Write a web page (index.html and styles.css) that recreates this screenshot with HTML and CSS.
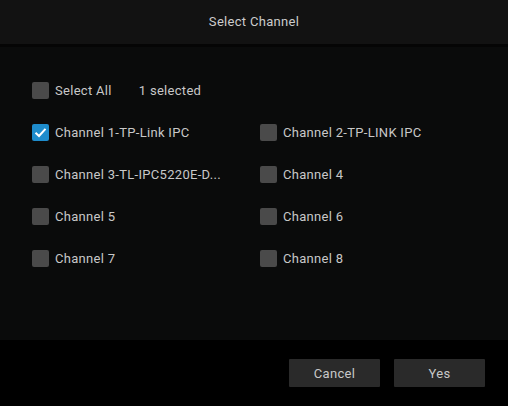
FILE: index.html
```html
<!DOCTYPE html>
<html lang="en">
<head>
    <meta charset="UTF-8">
    <title>Select Channel</title>
    <link rel="stylesheet" href="styles.css">
</head>
<body>
    <div class="dialog">
        <div class="dialogHeader">Select Channel</div>
        <div class="dialogBody">
            <div class="row">
                <label class="check"><span class="box"></span>Select All</label>
                <span class="count">1 selected</span>
            </div>
            <div class="channelGrid">
                <label class="check"><span class="box checked"><svg width="17" height="17" viewBox="0 0 17 17"><path d="M3.5 8.8 L7 12 L13.5 4.8" fill="none" stroke="#fff" stroke-width="2"/></svg></span>Channel 1-TP-Link IPC</label>
                <label class="check"><span class="box"></span>Channel 2-TP-LINK IPC</label>
                <label class="check"><span class="box"></span>Channel 3-TL-IPC5220E-D...</label>
                <label class="check"><span class="box"></span>Channel 4</label>
                <label class="check"><span class="box"></span>Channel 5</label>
                <label class="check"><span class="box"></span>Channel 6</label>
                <label class="check"><span class="box"></span>Channel 7</label>
                <label class="check"><span class="box"></span>Channel 8</label>
            </div>
        </div>
        <div class="dialogFooter">
            <button class="btn">Cancel</button>
            <button class="btn">Yes</button>
        </div>
    </div>
</body>
</html>
```

FILE: styles.css
```css
body {
    margin: 0;
    background-color: #000;
    font-family: Roboto, "Liberation Sans", sans-serif;
    font-size: 13px;
    letter-spacing: 0.3px;
    color: #c8c8c8;
}

.dialog {
    display: flex;
    flex-direction: column;
    width: 508px;
    height: 406px;
}

.dialogHeader {
    height: 44px;
    line-height: 44px;
    text-align: center;
    background-color: #121212;
    border-bottom: 3px solid #050505;
    color: #cccccc;
}

.dialogBody {
    flex: 1;
    background-color: #0a0b0b;
    padding: 22px 0 0 32px;
}

.row,
.channelGrid > .check {
    height: 42px;
}

.row {
    display: flex;
    align-items: center;
}

.channelGrid {
    display: grid;
    grid-template-columns: 228px 228px;
}

.check {
    display: flex;
    align-items: center;
    white-space: nowrap;
}

.box {
    width: 17px;
    height: 17px;
    border-radius: 2px;
    background-color: #4a4a4a;
    margin-right: 6px;
    flex-shrink: 0;
}

.box.checked {
    background-color: #1e8ccc;
}

.box svg {
    display: block;
}

.count {
    margin-left: 27px;
}

.dialogFooter {
    height: 66px;
    background-color: #000;
    display: flex;
    justify-content: flex-end;
    align-items: center;
    gap: 14px;
    padding: 0 23px 0 0;
}

.btn {
    width: 91px;
    height: 28px;
    border: none;
    border-radius: 1px;
    background-color: #2a2a2a;
    color: #c8c8c8;
    font-family: Roboto, "Liberation Sans", sans-serif;
    font-size: 13px;
    letter-spacing: 0.3px;
}
```
